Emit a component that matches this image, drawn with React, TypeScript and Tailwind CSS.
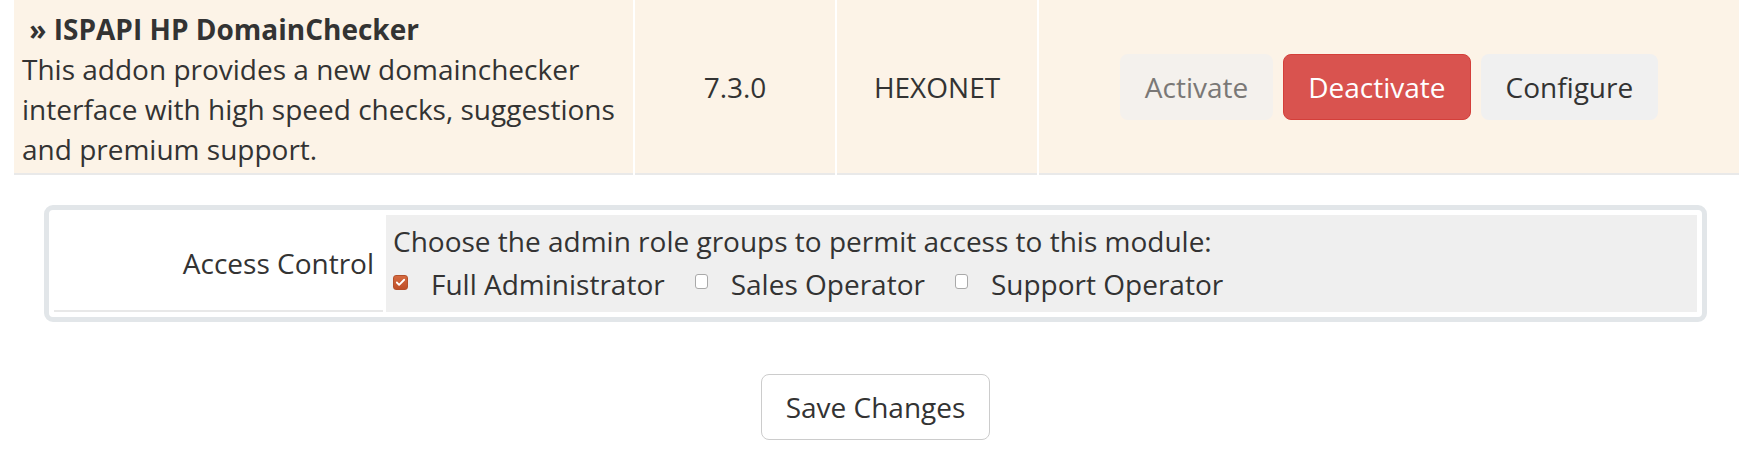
import { Check } from "lucide-react";

const font = { fontFamily: "'Open Sans', 'Liberation Sans', sans-serif" };

function Box({ checked }: { checked?: boolean }) {
  if (checked) {
    return (
      <span className="inline-flex w-[15px] h-[15px] shrink-0 items-center justify-center rounded-[3px] border border-[#b4502b] bg-gradient-to-b from-[#d56a40] to-[#bf4f28] mb-[4px]">
        <Check className="w-[11px] h-[11px] text-white" strokeWidth={4} />
      </span>
    );
  }
  return (
    <span className="inline-block w-[13px] h-[15px] shrink-0 rounded-[3px] border border-[#a9a9a9] bg-white mb-[6px]" />
  );
}

function Role({ label, checked, last }: { label: string; checked?: boolean; last?: boolean }) {
  return (
    <label className={`flex items-center ${last ? "" : "mr-[30px]"}`}>
      <Box checked={checked} />
      <span className="ml-[23px]">{label}</span>
    </label>
  );
}

export default function App() {
  const cell = "bg-[#fcf3e7] border-b-2 border-[#e9e9e9]";
  return (
    <div className="bg-white text-[#333] text-[28px] leading-[40px] w-[1751px] h-[458px] overflow-hidden" style={font}>
      {/* addon row */}
      <div className="flex gap-[2px] ml-[14px] mr-[12px]">
        <div className={`${cell} w-[619px] pl-[8px] pt-[9px] pb-[4px]`}>
          <div className="font-bold">{"\u00a0» ISPAPI HP DomainChecker"}</div>
          <div className="whitespace-nowrap">This addon provides a new domainchecker</div>
          <div className="whitespace-nowrap">interface with high speed checks, suggestions</div>
          <div className="whitespace-nowrap">and premium support.</div>
        </div>
        <div className={`${cell} w-[200px] flex items-center justify-center`}>7.3.0</div>
        <div className={`${cell} w-[200px] flex items-center justify-center`}>HEXONET</div>
        <div className={`${cell} flex-1 flex items-center justify-center gap-[10px]`}>
          <button className="px-[24px] py-[12px] rounded-[8px] border border-transparent bg-[#f4f1ed] text-[#7a7876] cursor-not-allowed">
            Activate
          </button>
          <button className="px-[24px] py-[12px] rounded-[8px] border border-[#d43f3a] bg-[#d9534f] text-white">
            Deactivate
          </button>
          <button className="px-[24px] py-[12px] rounded-[8px] border border-transparent bg-[#f0f0f0] text-[#333]">
            Configure
          </button>
        </div>
      </div>

      {/* access control */}
      <div className="mx-[44px] mt-[30px] border-[5px] border-[#e2e6e9] rounded-[9px] p-[5px] bg-white">
        <div className="flex gap-[3px] h-[97px]">
          <div className="w-[329px] flex items-center justify-end pr-[9px] border-b-2 border-[#e8e8e8]">
            Access Control
          </div>
          <div className="flex-1 bg-[#efefef] pl-[7px] pt-[6px]">
            <div className="whitespace-nowrap">Choose the admin role groups to permit access to this module:</div>
            <div className="flex items-center mt-[3px]">
              <Role label="Full Administrator" checked />
              <Role label="Sales Operator" />
              <Role label="Support Operator" last />
            </div>
          </div>
        </div>
      </div>

      {/* save */}
      <div className="flex justify-center mt-[52px]">
        <button className="px-[24px] py-[12px] rounded-[8px] border border-[#ccc] bg-white text-[#333]">
          Save Changes
        </button>
      </div>
    </div>
  );
}
